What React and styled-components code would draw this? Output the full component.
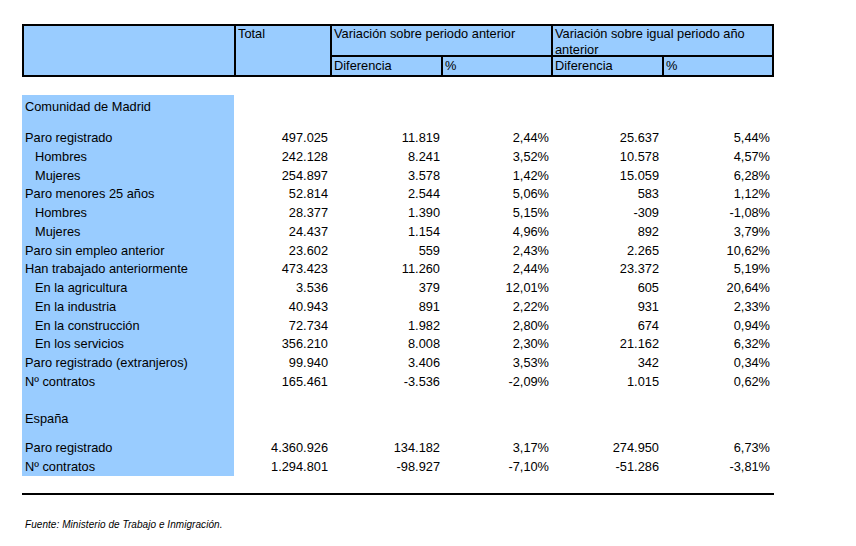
import React from 'react'
import styled, { createGlobalStyle } from 'styled-components'

const GlobalStyle = createGlobalStyle`
  body {
    margin: 0;
    background: #fff;
    font-family: "Liberation Sans", Arial, sans-serif;
    color: #000;
  }
`

const Page = styled.div`
  width: 856px;
  height: 546px;
  padding: 24px 0 0 22px;
  box-sizing: border-box;
  font-size: 12.8px;
`

const Header = styled.div`
  display: grid;
  grid-template-columns: 210px 94px 109px 108px 109px 108px;
  grid-template-rows: 29px 18px;
  gap: 2px;
  padding: 2px;
  width: 752px;
  box-sizing: border-box;
  background: #000;
`

const HeadCell = styled.div`
  background: #99ccff;
  padding: 0 2px;
  line-height: ${(p) => (p.$sub ? '17px' : '15.5px')};
  grid-column: ${(p) => p.$col || 'auto'};
  grid-row: ${(p) => p.$row || 'auto'};
`

const Body = styled.div`
  margin-top: 18px;
  display: flex;
  flex-direction: column;
`

const Row = styled.div`
  display: grid;
  grid-template-columns: 212px 96px 111px 110px 111px 110px;
  height: ${(p) => p.$h || 18.75}px;
  line-height: 18.75px;
`

const Label = styled.div`
  background: #99ccff;
  padding-left: ${(p) => (p.$indent ? 13 : 3)}px;
  white-space: nowrap;
`

const Num = styled.div`
  text-align: right;
  padding-right: ${(p) => p.$pr ?? 2}px;
  white-space: nowrap;
`

const Rule = styled.div`
  margin-top: 16.5px;
  width: 752px;
  height: 2px;
  background: #000;
`

const Source = styled.div`
  margin: 24.5px 0 0 3px;
  font-size: 10px;
  line-height: 12px;
  font-style: italic;
  letter-spacing: 0.06px;
`

const madrid = [
  ['Paro registrado', false, '497.025', '11.819', '2,44%', '25.637', '5,44%'],
  ['Hombres', true, '242.128', '8.241', '3,52%', '10.578', '4,57%'],
  ['Mujeres', true, '254.897', '3.578', '1,42%', '15.059', '6,28%'],
  ['Paro menores 25 años', false, '52.814', '2.544', '5,06%', '583', '1,12%'],
  ['Hombres', true, '28.377', '1.390', '5,15%', '-309', '-1,08%'],
  ['Mujeres', true, '24.437', '1.154', '4,96%', '892', '3,79%'],
  ['Paro sin empleo anterior', false, '23.602', '559', '2,43%', '2.265', '10,62%'],
  ['Han trabajado anteriormente', false, '473.423', '11.260', '2,44%', '23.372', '5,19%'],
  ['En la agricultura', true, '3.536', '379', '12,01%', '605', '20,64%'],
  ['En la industria', true, '40.943', '891', '2,22%', '931', '2,33%'],
  ['En la construcción', true, '72.734', '1.982', '2,80%', '674', '0,94%'],
  ['En los servicios', true, '356.210', '8.008', '2,30%', '21.162', '6,32%'],
  ['Paro registrado (extranjeros)', false, '99.940', '3.406', '3,53%', '342', '0,34%'],
  ['Nº contratos', false, '165.461', '-3.536', '-2,09%', '1.015', '0,62%'],
]

const spain = [
  ['Paro registrado', false, '4.360.926', '134.182', '3,17%', '274.950', '6,73%'],
  ['Nº contratos', false, '1.294.801', '-98.927', '-7,10%', '-51.286', '-3,81%'],
]

const pads = [2, 1, 2, 3, 2]

const DataRow = ({ row }) => {
  const [label, indent, ...values] = row
  return (
    <Row>
      <Label $indent={indent}>{label}</Label>
      {values.map((v, i) => (
        <Num key={i} $pr={pads[i]}>{v}</Num>
      ))}
    </Row>
  )
}

const Spacer = ({ h }) => (
  <Row $h={h}>
    <Label />
  </Row>
)

const App = () => {
  return (
    <>
      <GlobalStyle />
      <Page>
        <Header>
          <HeadCell $row="1 / 3" />
          <HeadCell $row="1 / 3">Total</HeadCell>
          <HeadCell $col="3 / 5">Variación sobre periodo anterior</HeadCell>
          <HeadCell $col="5 / 7">Variación sobre igual periodo año anterior</HeadCell>
          <HeadCell $sub>Diferencia</HeadCell>
          <HeadCell $sub>%</HeadCell>
          <HeadCell $sub>Diferencia</HeadCell>
          <HeadCell $sub>%</HeadCell>
        </Header>

        <Body>
          <Spacer h={3} />
          <Row>
            <Label>Comunidad de Madrid</Label>
          </Row>
          <Spacer h={12.45} />
          {madrid.map((r, i) => (
            <DataRow key={i} row={r} />
          ))}
          <Spacer h={18.5} />
          <Row>
            <Label>España</Label>
          </Row>
          <Spacer h={10} />
          {spain.map((r, i) => (
            <DataRow key={i} row={r} />
          ))}
        </Body>

        <Rule />
        <Source>Fuente: Ministerio de Trabajo e Inmigración.</Source>
      </Page>
    </>
  )
}

export default App
